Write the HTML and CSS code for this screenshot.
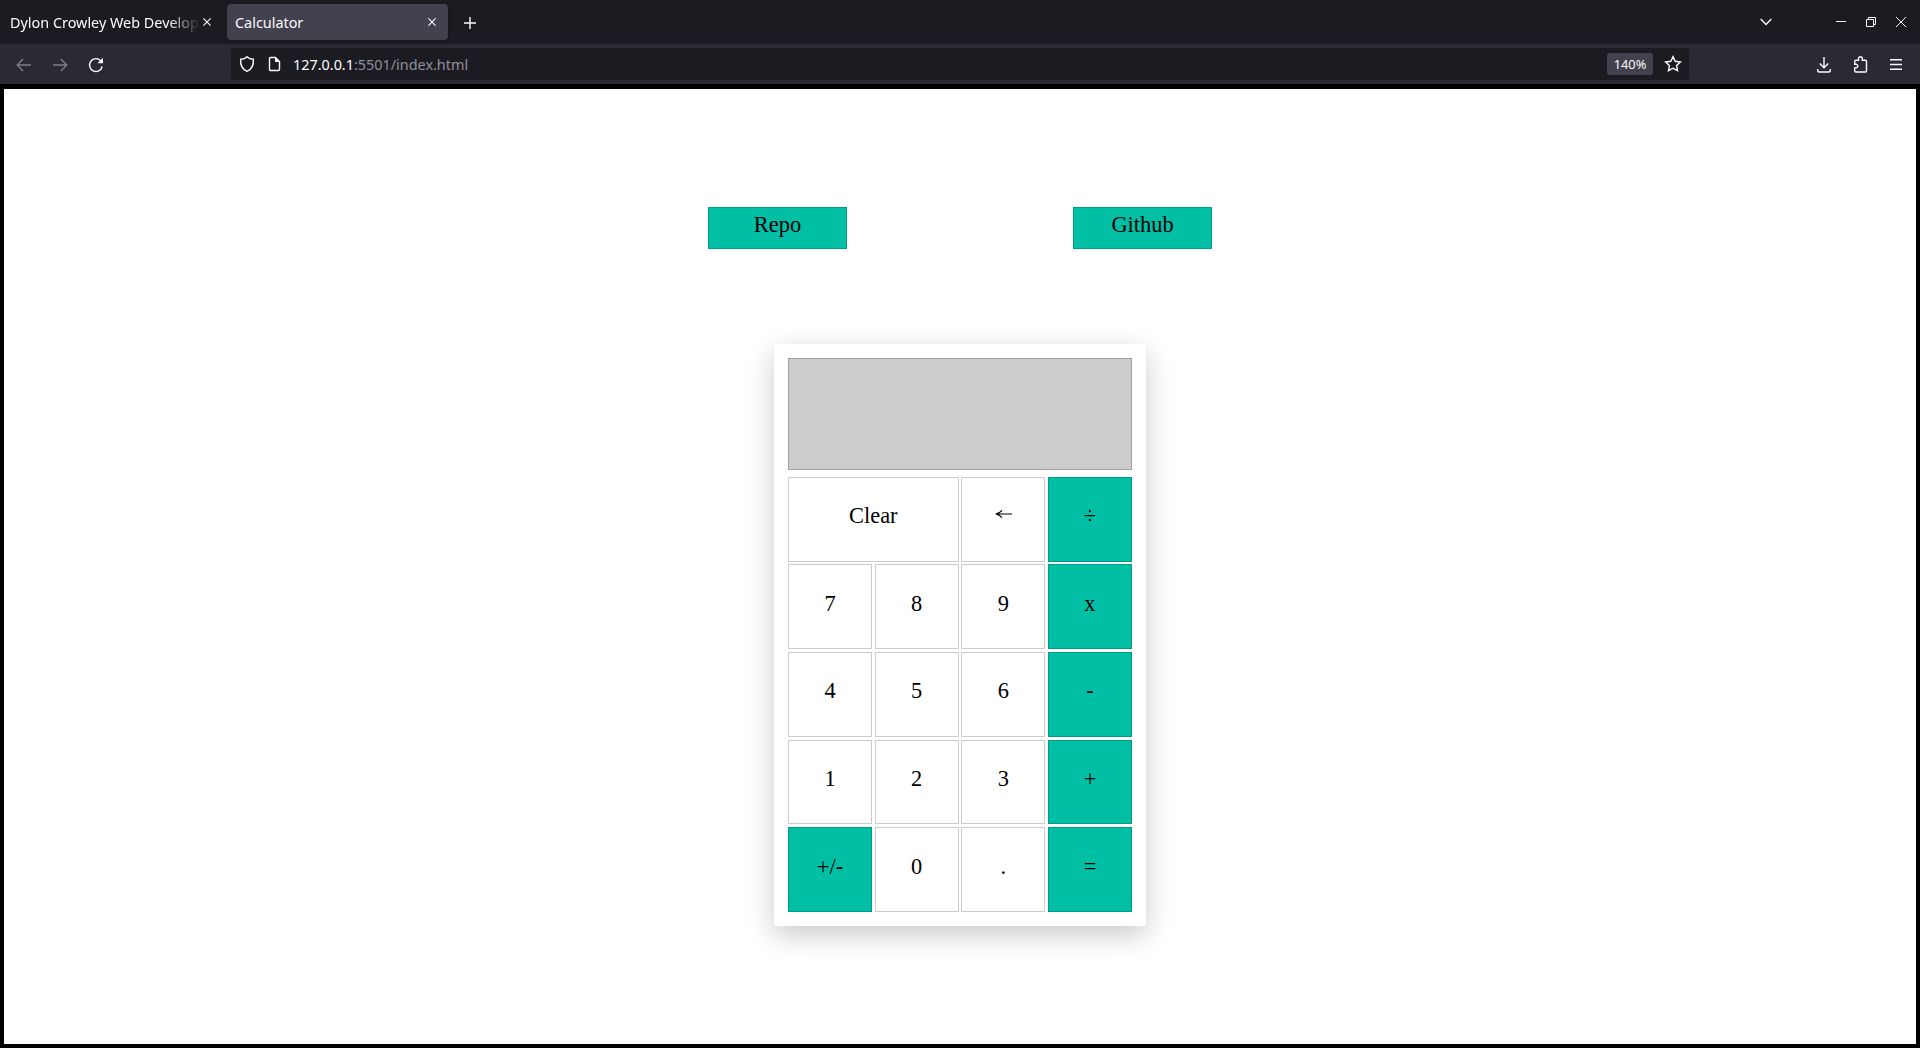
FILE: index.html
```html
<!DOCTYPE html>
<html lang="en">
<head>
<meta charset="utf-8">
<title>Calculator</title>
<link rel="stylesheet" href="styles.css">
</head>
<body>
<div class="browser">
  <header class="tabs">
    <div class="tab tab-first">
      <span class="tab-title faded">Dylon Crowley Web Development</span>
      <svg class="tab-close" width="8" height="8" viewBox="0 0 8 8"><path d="M.4.4l7.2 7.2M7.6.4L.4 7.6"/></svg>
    </div>
    <div class="tab tab-active">
      <span class="tab-title">Calculator</span>
      <svg class="tab-close" width="8" height="8" viewBox="0 0 8 8"><path d="M.4.4l7.2 7.2M7.6.4L.4 7.6"/></svg>
    </div>
    <svg class="new-tab" width="12" height="12" viewBox="0 0 12 12"><path d="M6 0v12M0 6h12"/></svg>
    <div class="window-controls">
      <svg class="chevron" width="12" height="8" viewBox="0 0 12 8"><path d="M.7 1L6 6.4 11.3 1"/></svg>
      <svg class="minimize" width="10" height="10" viewBox="0 0 10 10"><path d="M0 4.5h10"/></svg>
      <svg class="restore" width="10" height="10" viewBox="0 0 10 10"><path d="M.5 2.5h7v7h-7zM2.5 2.5v-2h7v7h-2"/></svg>
      <svg class="close" width="10" height="10" viewBox="0 0 10 10"><path d="M0 0l10 10M10 0L0 10"/></svg>
    </div>
  </header>
  <nav class="toolbar">
    <svg class="back dim" width="16" height="16" viewBox="0 0 16 16"><path d="M15 8H1.5M7 2L1.3 8 7 14"/></svg>
    <svg class="forward dim" width="16" height="16" viewBox="0 0 16 16"><path d="M1 8h13.500M9 2l5.700 6L9 14"/></svg>
    <svg class="reload" width="16" height="16" viewBox="0 0 16 16"><path d="M14.200 9.500A6.400 6.400 0 1 1 12.700 3.700"/><path class="solid" d="M15 .8V6.200H9.500z"/></svg>
    <div class="address">
      <svg class="shield" width="16" height="18" viewBox="0 0 16 18"><path d="M8 1.700C6.500 3.300 4 4.100 1.700 4.200 1.200 9.500 3 14.200 8 16.300 13 14.200 14.800 9.500 14.300 4.200 12 4.100 9.500 3.300 8 1.700z"/></svg>
      <svg class="page-icon" width="13" height="16" viewBox="0 0 13 16"><path d="M2.500 1.500h5l4 4v7.800q0 1.200-1.200 1.200H2.700q-1.200 0-1.200-1.200V2.700q0-1.200 1.200-1.200z"/><path class="solid" d="M7 1v5h5z"/></svg>
      <span class="url"><b>127.0.0.1</b>:5501/index.html</span>
      <span class="zoom">140%</span>
      <svg class="star" width="18" height="18" viewBox="0 0 18 18"><path d="M9 1.600l2.200 4.700 5.200.7-3.800 3.600.9 5.100L9 13.200l-4.500 2.500.9-5.100L1.600 7l5.200-.7z"/></svg>
    </div>
    <svg class="download" width="14" height="16" viewBox="0 0 14 16"><path d="M7 0v10.500M2.700 6.500L7 10.800l4.300-4.300M.7 12v1.500q0 1.500 1.500 1.500h9.600q1.500 0 1.500-1.500V12"/></svg>
    <svg class="extensions" width="15" height="17" viewBox="0 0 15 17"><path d="M1.700 5.500q0-1.200 1.200-1.200H5.500V2.700a1.900 1.900 0 0 1 3.800 0v1.600h3q1.200 0 1.200 1.200v9.300q0 1.200-1.200 1.200H2.900q-1.200 0-1.200-1.200v-2.900h1.800a1.900 1.900 0 0 0 0-3.600H1.700z"/></svg>
    <svg class="menu" width="12" height="11" viewBox="0 0 12 11"><path d="M0 .8h12M0 5.500h12M0 10.200h12"/></svg>
  </nav>
  <main class="page">
    <div class="links">
      <a class="link">Repo</a>
      <a class="link">Github</a>
    </div>
    <section class="calculator">
      <div class="screen"></div>
      <div class="keys">
        <div class="key wide">Clear</div><div class="key"><svg class="arrow" width="17" height="8" viewBox="0 0 17 8" aria-label="Backspace"><path d="M1 4h16M7 .4Q4.500 3.400.8 4 4.500 4.600 7 7.600"/></svg></div><div class="key accent">÷</div>
        <div class="key">7</div><div class="key">8</div><div class="key">9</div><div class="key accent">x</div>
        <div class="key">4</div><div class="key">5</div><div class="key">6</div><div class="key accent">-</div>
        <div class="key">1</div><div class="key">2</div><div class="key">3</div><div class="key accent">+</div>
        <div class="key accent">+/-</div><div class="key">0</div><div class="key">.</div><div class="key accent">=</div>
      </div>
    </section>
  </main>
</div>
</body>
</html>
```
FILE: styles.css
```css
* { box-sizing: border-box; }
body { margin: 0; background: #000; }
svg { display: block; flex: none; fill: none; stroke: #fbfbfe; stroke-width: 1.4; stroke-linecap: butt; overflow: visible; }
.solid { fill: #fbfbfe; stroke: none; }

.browser { display: flex; flex-direction: column; height: 1048px; }

.tabs { display: flex; align-items: center; height: 44px; flex: none; background: #1c1b22; color: #fbfbfe; font: 14.4px/20px "Noto Sans", sans-serif; }
.tab { display: flex; align-items: center; height: 36px; white-space: nowrap; }
.tab-title { padding-top: 2px; }
.tab-first { width: 227px; padding: 0 15.500px 0 10px; }
.tab-first .tab-title { width: 190px; overflow: hidden; }
.faded { -webkit-mask-image: linear-gradient(to left, transparent, #000 32px); mask-image: linear-gradient(to left, transparent, #000 32px); }
.tab-first .tab-close { margin-left: 3px; }
.tab-active { width: 221px; padding: 0 12px 0 8px; border-radius: 4px; background: #42414d; box-shadow: 0 0 3px rgba(0, 0, 0, .4); }
.tab-active .tab-close { margin-left: auto; }
.tab-close { stroke-width: 1.100; }
.new-tab { margin: 1px 0 0 15.500px; }
.window-controls { display: flex; align-items: center; margin: 0 14px 0 auto; }
.window-controls svg { stroke-width: 1; }
.window-controls .chevron { margin-right: 64px; stroke-width: 1.400; }
.restore { margin: 0 20px; }

.toolbar { display: flex; align-items: center; height: 40px; padding: 1px 18px 0 16px; flex: none; background: #2b2a33; }
.dim { opacity: .4; }
.forward { margin-left: 20px; }
.reload { margin-left: 20px; }
.address { display: flex; align-items: center; width: 1458px; height: 32px; margin: -1px 0 0 127px; padding: 0 7px 0 8px; border-radius: 4px; background: #1c1b22; font: 14.4px/20px "Noto Sans", sans-serif; }
.page-icon { margin-left: 13px; }
.url { margin-left: 12px; padding-top: 2px; color: #8f8f9d; }
.url b { color: #fbfbfe; font-weight: 400; }
.zoom { width: 46px; height: 22px; margin-left: auto; border-radius: 3px; background: #42414d; color: #fbfbfe; font-size: 12.800px; line-height: 23px; text-align: center; }
.star { margin-left: 11px; }
.download { margin-left: 127.500px; }
.extensions { margin-left: 22px; }
.menu { margin-left: 22.500px; }

.page { display: flex; flex-direction: column; align-items: center; flex: 1; margin: 5px 4px 4px; background: #fff; font: 22.4px/25px "Liberation Serif", serif; color: #000; }
.links { display: flex; justify-content: space-between; width: 504px; margin-top: 118px; }
.link { width: 139px; height: 42px; padding-top: 4px; border: 1px solid #009e84; background: #00bfa5; text-align: center; }
.calculator { width: 372px; height: 582px; margin-top: 95px; padding: 14px; border-radius: 3px; background: #fff; box-shadow: 0 8.400px 28px rgba(0, 0, 0, .21); }
.screen { height: 112px; border: 1px solid #a1a1a1; background: #ccc; }
.keys { display: grid; grid-template-columns: repeat(4, 84px); grid-auto-rows: 84.620px; justify-content: space-between; row-gap: 2.940px; margin-top: 6.950px; }
.key { padding-top: 25.420px; border: 1px solid #ccc; text-align: center; }
.wide { grid-column: span 2; }
.accent { border-color: #009e84; background: #00bfa5; }
.arrow { margin: 7px auto 0; stroke: #000; stroke-width: 1.200; }
```
